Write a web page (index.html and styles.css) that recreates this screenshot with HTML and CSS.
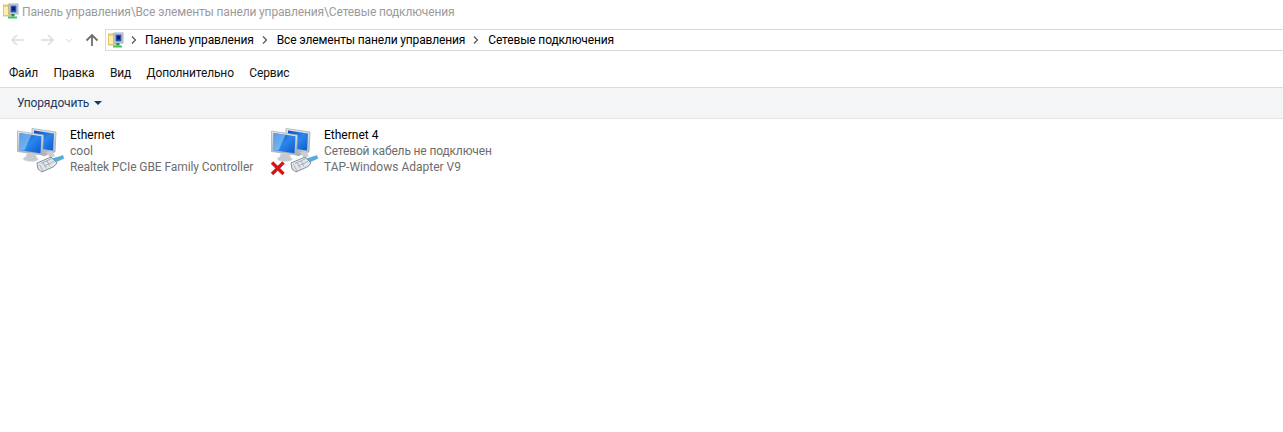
FILE: index.html
```html
<!DOCTYPE html>
<html lang="ru">
<head>
<meta charset="utf-8">
<title>Сетевые подключения</title>
<link rel="stylesheet" href="styles.css">
</head>
<body>
<svg class="defs" width="0" height="0" aria-hidden="true">
  <defs>
    <linearGradient id="scr" x1="0" y1="0" x2="1" y2="1">
      <stop offset="0" stop-color="#0a48c0"/><stop offset=".5" stop-color="#2b86ea"/><stop offset="1" stop-color="#0b5ad0"/>
    </linearGradient>
    <linearGradient id="bez" x1="0" y1="0" x2="0" y2="1">
      <stop offset="0" stop-color="#e4e8ec"/><stop offset="1" stop-color="#a9b0b8"/>
    </linearGradient>
    <symbol id="cp" viewBox="0 0 16 16">
      <path d="M0 2h6l1 1h2v10H0z" fill="#f4d56e" stroke="#c4a548" stroke-width=".6"/>
      <path d="M1 4h4v8H1z" fill="#fbeeb4"/>
      <rect x="6" y="1" width="9" height="10" fill="#dde4ec" stroke="#7e8c9c" stroke-width=".7"/>
      <rect x="7.500" y="2.500" width="6" height="7" fill="#2a50b8"/>
      <rect x="9" y="4" width="3" height="3.500" fill="#0b1f66"/>
      <rect x="8.500" y="11" width="3" height="2.500" fill="#1e8f4a"/>
      <rect x="5" y="13.500" width="9" height="2" fill="#3fc068"/>
    </symbol>
    <symbol id="net" viewBox="0 0 52 52">
      <path d="M18 3.500l24 3.500-1 20-5 1-6 3-12-8z" fill="url(#bez)" stroke="#9aa3ae" stroke-width=".7"/>
      <path d="M20 5.500l20 3-1 17-19-2.500z" fill="url(#scr)"/>
      <path d="M32 27l6-1 3 5-5 2z" fill="#c9ced4"/>
      <path d="M3.500 6l26 4-1 20-25-3.500z" fill="url(#bez)" stroke="#a2aab4" stroke-width=".7"/>
      <path d="M5.500 8l22 3.200-1 17-21-3z" fill="url(#scr)"/>
      <path d="M5.500 8l12 1.800-7 15.800-5-.6z" fill="#9ad2fa" opacity=".6"/>
      <path d="M13 28l9 1.200.5 3.300c1.800.6 2.500 2 .5 3-3.500 1.500-10 1.200-13-.5-1.500-1.200-.7-2.600 2-3.300z" fill="#c6cbd1" stroke="#d9dde1" stroke-width=".5"/>
      <path d="M23 38L37 32l6 6-3 3.500L28 47l-4-3z" fill="#e2e6ea" stroke="#78838e" stroke-width=".9"/>
      <path d="M27 38.500l11-5M30 41l10-4.500M25.500 39.500l3.500 6.500M29 37.500l3.500 6M33 36l3 5.500" stroke="#98a2ac" stroke-width=".8" fill="none"/>
      <path d="M39 33.500l10-3 .8 3-8 3.500z" fill="#4bb1dc" stroke="#6b8a9c" stroke-width=".4"/>
    </symbol>
    <symbol id="x" viewBox="0 0 16 16">
      <path d="M2 2.500L13.500 14M13.500 2.500L2 14" stroke="#d01818" stroke-width="3.400"/>
    </symbol>
  </defs>
</svg>
<header class="title"><svg class="ico16"><use href="#cp"/></svg><span>Панель управления\Все элементы панели управления\Сетевые подключения</span></header>
<nav class="nav">
  <div class="btns">
    <svg class="b-back" width="16" height="12" viewBox="0 0 16 12"><path d="M2 6h12M7 1L2 6l5 5" fill="none" stroke="#dcdcdc" stroke-width="1.500"/></svg>
    <svg class="b-fwd" width="16" height="12" viewBox="0 0 16 12"><path d="M2 6h12M9 1l5 5-5 5" fill="none" stroke="#dcdcdc" stroke-width="1.500"/></svg>
    <svg class="b-drop" width="8" height="5" viewBox="0 0 8 5"><path d="M1 1l3 3 3-3" fill="none" stroke="#d8d8d8" stroke-width="1"/></svg>
    <svg class="b-up" width="14" height="14" viewBox="0 0 14 14"><path d="M7 13V2M1.500 7.500L7 2l5.500 5.500" fill="none" stroke="#6d6d6d" stroke-width="1.800"/></svg>
  </div>
  <div class="addr">
    <svg class="ico16"><use href="#cp"/></svg>
    <svg class="sep first" width="6" height="8" viewBox="0 0 6 8"><path d="M1 .5L4.500 4 1 7.500" fill="none" stroke="#555" stroke-width="1.200"/></svg>
    <span>Панель управления</span>
    <svg class="sep" width="6" height="8" viewBox="0 0 6 8"><path d="M1 .5L4.500 4 1 7.500" fill="none" stroke="#555" stroke-width="1.200"/></svg>
    <span>Все элементы панели управления</span>
    <svg class="sep" width="6" height="8" viewBox="0 0 6 8"><path d="M1 .5L4.500 4 1 7.500" fill="none" stroke="#555" stroke-width="1.200"/></svg>
    <span>Сетевые подключения</span>
  </div>
</nav>
<div class="menu"><span>Файл</span><span>Правка</span><span>Вид</span><span>Дополнительно</span><span>Сервис</span></div>
<div class="bar"><span>Упорядочить</span><i class="caret"></i></div>
<main class="list">
  <section class="item">
    <div class="icon"><svg class="net"><use href="#net"/></svg></div>
    <div class="txt"><b class="lat">Ethernet</b><span class="lat">cool</span><span class="tight">Realtek PCIe GBE Family Controller</span></div>
  </section>
  <section class="item">
    <div class="icon"><svg class="net"><use href="#net"/></svg><svg class="xmark"><use href="#x"/></svg></div>
    <div class="txt"><b class="lat">Ethernet 4</b><span>Сетевой кабель не подключен</span><span class="lat">TAP-Windows Adapter V9</span></div>
  </section>
</main>
</body>
</html>
```
FILE: styles.css
```css
* { box-sizing: border-box; }
html, body { margin: 0; height: 100%; background: #fff; }
body { font: 12px/16px Roboto, "Open Sans", sans-serif; letter-spacing: -0.15px; color: #000; overflow: hidden; }
.defs { position: absolute; }
.ico16 { width: 16px; height: 16px; flex: none; }
.title { height: 29px; padding: 3px 0 0 3px; display: flex; align-items: flex-start; gap: 3px; color: #9b9b9b; }
.title span { line-height: 18px; }
.nav { height: 22px; display: flex; }
.btns { width: 105px; height: 22px; display: flex; align-items: center; }
.b-back { margin-left: 10px; }
.b-fwd { margin-left: 13px; }
.b-drop { margin-left: 10px; }
.b-up { margin-left: 12px; }
.addr { flex: 1; height: 22px; border: solid #d9d9d9; border-width: 1px 0 1px 1px; display: flex; align-items: center; padding-left: 2px; }
.sep { margin: 0 9px 0 8px; flex: none; }
.sep.first { margin: 0 8px 0 7px; }
.menu { height: 36px; display: flex; align-items: center; padding: 7px 0 0 9px; gap: 15.5px; color: #111; }
.bar { height: 32px; background: #f4f5f7; border-top: 1px solid #dcdcdc; border-bottom: 1px solid #e6e6e6; display: flex; align-items: center; padding-left: 17px; gap: 5px; color: #1e395b; }
.caret { width: 0; height: 0; border: solid transparent; border-width: 4px 4.5px 0; border-top-color: #1e395b; }
.list { display: flex; padding: 8px 0 0 16px; }
.item { display: flex; width: 254px; }
.icon { width: 54px; height: 48px; position: relative; flex: none; }
.net { width: 52px; height: 52px; position: absolute; left: -2px; top: -2px; }
.xmark { position: absolute; left: 0; top: 33px; width: 16px; height: 16px; }
.txt { display: flex; flex-direction: column; white-space: nowrap; color: #6d6d6d; }
.txt b { font-weight: 400; color: #000; }
.lat { letter-spacing: 0; }
.tight { letter-spacing: -0.09px; }
```
